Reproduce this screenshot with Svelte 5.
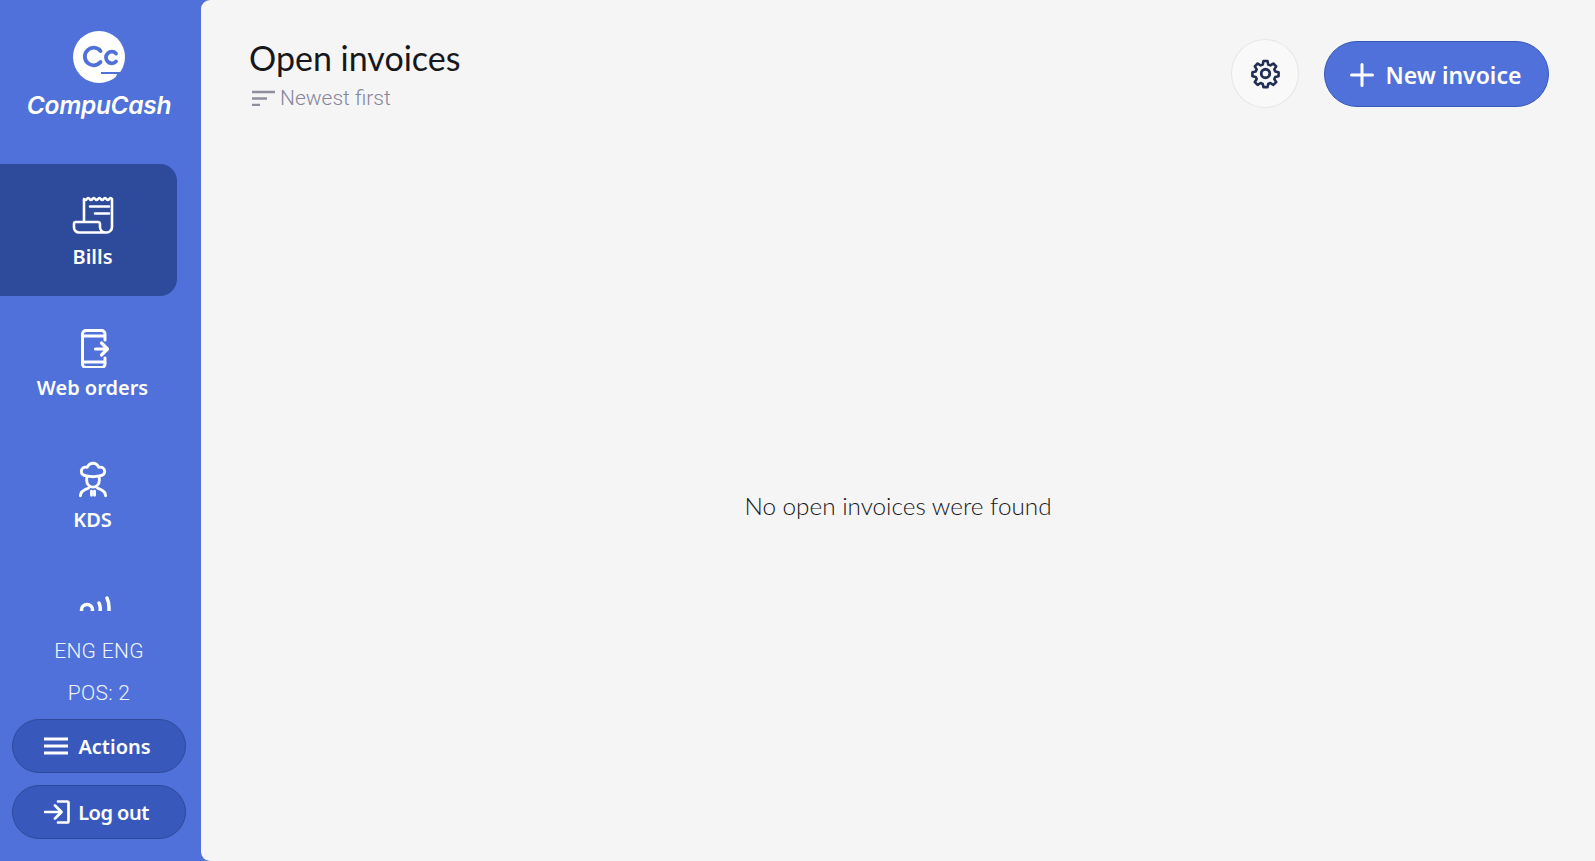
<script>
  const navItems = [
    { label: 'Bills', icon: 'bills', active: true },
    { label: 'Web orders', icon: 'phone' },
    { label: 'KDS', icon: 'chef' },
    { label: '', icon: 'signal' }
  ];
</script>

{#snippet navIcon(kind)}
  <svg class="nav-icon" viewBox="0 0 42 40" fill="none" stroke="currentColor" stroke-width="2.600" stroke-linecap="round" stroke-linejoin="round" aria-hidden="true">
    {#if kind === 'bills'}
      <path d="M12 26V3q1.4 2 2.8 0t2.8 0 2.8 0 2.8 0 2.8 0 2.8 0 2.8 0 2.8 0 2.8 0 2.8 0V31a5.5 5.5 0 0 1-5.5 5.5H7a5 5 0 0 1-5-5V28a2 2 0 0 1 2-2H26c1.6 0 2 1 2 2.500V31a5.500 5.500 0 0 0 5 5.500" />
      <path d="M18 10.500H37M23 17.500H37" />
    {:else if kind === 'phone'}
      <path d="M33 12V6a3.500 3.500 0 0 0-3.500-3.500H14A3.500 3.500 0 0 0 10.500 6V36a3.500 3.500 0 0 0 3.500 3.500H29.500A3.500 3.500 0 0 0 33 36V30M10.500 8H33M10.500 34H33" stroke-width="3" />
      <path d="M23.500 21H35M29.500 15 35.500 21 29.500 27" stroke-width="3.200" />
    {:else if kind === 'chef'}
      <g transform="translate(2.100 2.500) scale(.9)">
        <path d="M14 16c-4-.5-6-2.500-6-5.200 0-3.300 3-5.300 6.500-4.300C16 3.500 19 2 21 2s5 1.500 6.500 4.500c3.500-1 6.500 1 6.500 4.300 0 2.700-2 4.700-6 5.200v5c0 4-3 7.500-7 7.500s-7-3.500-7-7.500zM14 16c4 1 10 1 14 0" stroke-width="3.200" />
        <path d="M7 38c0-4 3-6.500 9-8.500M35 38c0-4-3-6.500-9-8.500" stroke-width="3.200" />
        <path d="M19.300 33v4.500M22.700 33v4.500" stroke-width="3.200" />
      </g>
    {:else}
      <circle cx="15" cy="19" r="5.500" stroke-width="3.500" />
      <path d="M27 12c1.500 3 1.500 8 0 12M35 7c2.500 5 2.500 14 1 20" stroke-width="3.500" />
    {/if}
  </svg>
{/snippet}

<div class="app">
  <aside class="sidebar">
    <div class="brand">
      <svg class="logo" viewBox="0 0 54 52" aria-hidden="true">
        <circle cx="27" cy="26" r="26" fill="#fff" />
        <path d="M28.500 20a8.800 8.800 0 1 0 0 11" fill="none" stroke="#4f71d9" stroke-width="3.800" stroke-linecap="round" />
        <path d="M44 22.500a5.800 5.800 0 1 0 0 8" fill="none" stroke="#4f71d9" stroke-width="3.800" stroke-linecap="round" />
        <path d="M29 42H54" stroke="#4f71d9" stroke-width="2" />
        <path d="M45 43H54V52H42z" fill="#4f71d9" />
      </svg>
      <div class="wordmark">CompuCash</div>
    </div>
    <nav class="nav">
      {#each navItems as item}
        <a class="nav-item" class:active={item.active} href="#top">
          {@render navIcon(item.icon)}
          {#if item.label}<span>{item.label}</span>{/if}
        </a>
      {/each}
    </nav>
    <div class="side-foot">
      <div class="meta">ENG ENG</div>
      <div class="meta">POS: 2</div>
      <button class="side-btn">
        <svg class="btn-icon" viewBox="0 0 24 24" fill="none" stroke="currentColor" stroke-width="3" stroke-linecap="square" aria-hidden="true"><path d="M1.500 5H22.500M1.500 12H22.500M1.500 19H22.500" /></svg>
        Actions
      </button>
      <button class="side-btn tight">
        <svg class="btn-icon wide" viewBox="0 0 26 24" fill="none" stroke="currentColor" stroke-width="2.700" stroke-linecap="round" stroke-linejoin="round" aria-hidden="true"><path d="M14 1.500H23a1.500 1.500 0 0 1 1.500 1.500V21a1.500 1.500 0 0 1-1.500 1.500H14M1 12H17M11 5.500 17.500 12 11 18.500" /></svg>
        Log out
      </button>
    </div>
  </aside>

  <main class="main">
    <header class="header">
      <div class="heading">
        <h1>Open invoices</h1>
        <div class="sort">
          <svg class="sort-icon" viewBox="0 0 24 16" fill="none" stroke="#8e8e9e" stroke-width="2.600" aria-hidden="true"><path d="M0 2H23M0 8.500H15M0 15H8" /></svg>
          <span>Newest first</span>
        </div>
      </div>
      <div class="actions">
        <button class="gear" aria-label="Settings">
          <svg viewBox="0 0 24 24" width="31" height="31" fill="none" stroke="#232e55" stroke-width="2.200" stroke-linejoin="round"><path d="M10.300 2h3.400l.6 2.900 1.800.8 2.500-1.600 2.400 2.400-1.600 2.500.8 1.800 2.800.6v3.400l-2.800.6-.8 1.800 1.600 2.500-2.400 2.400-2.500-1.600-1.800.8-.6 2.700h-3.400l-.6-2.700-1.800-.8-2.500 1.600-2.400-2.400 1.600-2.500-.8-1.800-2.800-.6v-3.400l2.800-.6.8-1.800-1.600-2.500 2.400-2.400 2.500 1.600 1.800-.8z" transform="translate(12 12) scale(.92) translate(-12 -12.500)" /><circle cx="12" cy="12" r="3.300" /></svg>
        </button>
        <button class="primary">
          <svg viewBox="0 0 24 24" width="24" height="24" fill="none" stroke="currentColor" stroke-width="3" stroke-linecap="round" aria-hidden="true"><path d="M12 1.500V22.500M1.500 12H22.500" /></svg>
          New invoice
        </button>
      </div>
    </header>
    <div class="empty">No open invoices were found</div>
  </main>
</div>

<style>
  :global(body) {
    margin: 0;
    background: #4f71d9;
    font-family: "Noto Sans", Roboto, sans-serif;
  }
  .app {
    display: grid;
    grid-template-columns: 201px 1fr;
    height: 100vh;
    overflow: hidden;
    background: #4f71d9;
  }
  .sidebar {
    display: flex;
    flex-direction: column;
    min-height: 0;
    color: #fff;
  }
  .brand {
    display: flex;
    flex-direction: column;
    align-items: center;
    padding-top: 31px;
    height: 164px;
    padding-right: 3px;
    box-sizing: border-box;
  }
  .logo {
    width: 54px;
    height: 52px;
  }
  .wordmark {
    margin-top: 7px;
    font: italic 600 24.500px/30px Inter, sans-serif;
    letter-spacing: -0.3px;
  }
  .nav {
    flex: 1;
    min-height: 0;
    overflow: hidden;
    padding-right: 24px;
  }
  .nav-item {
    display: flex;
    flex-direction: column;
    align-items: center;
    height: 131.500px;
    padding: 32px 0 0 8px;
    box-sizing: border-box;
    color: #fff;
    text-decoration: none;
    font-size: 20px;
    font-weight: 600;
    line-height: 26px;
    border-radius: 0 17px 17px 0;
  }
  .nav-item.active {
    background: #2e4a9a;
  }
  .nav-icon {
    width: 42px;
    height: 40px;
    margin-bottom: 7.500px;
  }
  .side-foot {
    display: flex;
    flex-direction: column;
    align-items: center;
    padding: 27px 15px 22px 12px;
  }
  .meta {
    font-family: Roboto, sans-serif;
    font-weight: 300;
    font-size: 21px;
    letter-spacing: 0.3px;
    line-height: 26px;
    margin-bottom: 16px;
    color: #f2f4fc;
  }
  .meta + .meta {
    margin-bottom: 13px;
  }
  .side-btn {
    display: flex;
    align-items: center;
    justify-content: center;
    gap: 10px;
    width: 174px;
    height: 54px;
    margin-bottom: 12px;
    border-radius: 27px;
    border: 1px solid #2e4a9a;
    background: #3859bb;
    color: #fff;
    font: 600 20px "Noto Sans", sans-serif;
    padding: 0 3px 0 0;
  }
  .side-btn.tight {
    gap: 8px;
    letter-spacing: -0.5px;
    padding-right: 5px;
  }
  .side-btn:last-child {
    margin-bottom: 0;
  }
  .btn-icon {
    width: 24px;
    height: 24px;
  }
  .btn-icon.wide {
    width: 26px;
  }
  .main {
    display: flex;
    flex-direction: column;
    min-width: 0;
    background: #f5f5f5;
    border-radius: 9px 0 0 9px;
    color: #17171c;
  }
  .header {
    display: flex;
    justify-content: space-between;
    align-items: flex-start;
    padding: 37px 46px 0 48px;
  }
  h1 {
    margin: 0;
    font: 400 34px/42px Lato, sans-serif;
  }
  .sort {
    display: flex;
    align-items: center;
    gap: 4px;
    margin-top: 6px;
    color: #85859a;
    font: 300 21px/26px Roboto, sans-serif;
  }
  .sort-icon {
    width: 24px;
    height: 16px;
    margin-left: 3px;
  }
  .actions {
    display: flex;
    align-items: center;
    gap: 25px;
    height: 69px;
    margin-top: 2px;
  }
  .gear {
    display: flex;
    align-items: center;
    justify-content: center;
    width: 68px;
    height: 69px;
    padding: 0;
    border-radius: 50%;
    border: 1px solid #e6e6e8;
    background: #f9f9f9;
  }
  .primary {
    display: flex;
    align-items: center;
    justify-content: center;
    gap: 12px;
    width: 225px;
    height: 66px;
    padding: 2px 2px 0 0;
    border-radius: 33px;
    border: 1px solid #3859bb;
    background: #4f71d9;
    color: #fff;
    font: 600 23px "Noto Sans", sans-serif;
  }
  .empty {
    flex: 1;
    display: flex;
    align-items: center;
    justify-content: center;
    padding-top: 40px;
    font: 300 24.300px/32px Lato, sans-serif;
    color: #17171c;
  }
</style>
